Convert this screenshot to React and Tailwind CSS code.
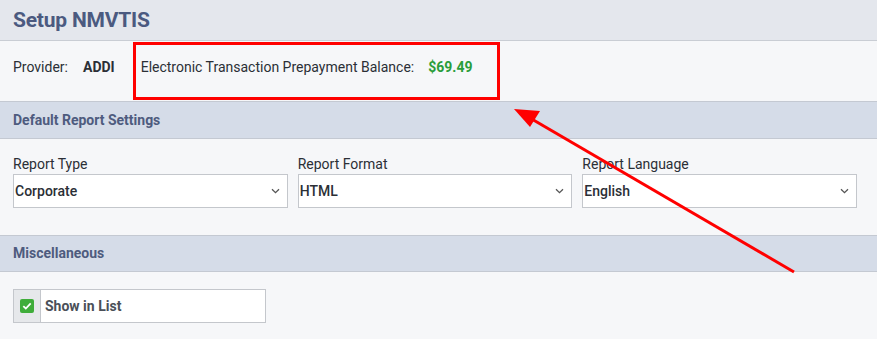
import React from "react";

function Chevron() {
  return (
    <svg width="9" height="6" viewBox="0 0 9 6" className="shrink-0">
      <path d="M1 1.2 L4.5 4.6 L8 1.2" fill="none" stroke="#555" strokeWidth="1.3" />
    </svg>
  );
}

function Select({ label, value }) {
  return (
    <div className="flex flex-col flex-1">
      <div className="text-[14px] text-[#2b2f36] leading-[17px] mb-[1px]">{label}</div>
      <div className="h-[34px] bg-white border border-[#c4c7cc] flex items-center pl-[1px] pr-[7px]">
        <span className="flex-1 text-[14px] font-medium text-[#2b2f36]">{value}</span>
        <Chevron />
      </div>
    </div>
  );
}

export default function App() {
  return (
    <div
      className="relative w-[877px] h-[339px] overflow-hidden bg-[#f6f7f9]"
      style={{ fontFamily: "Roboto, 'Liberation Sans', sans-serif" }}
    >
      <div className="h-[41px] bg-[#e4e7ed] border-b border-[#c9cdd4] flex items-center px-[13px]">
        <h1 className="text-[21px] font-bold text-[#4b5a80] tracking-[-0.2px] mt-[1px]">Setup NMVTIS</h1>
      </div>
      <div className="h-[60px] flex items-start pt-[16px] px-[13px] text-[14px] text-[#2b2f36]">
        <span>Provider:</span>
        <span className="ml-[15px] font-bold">ADDI</span>
        <span className="ml-[26px]">Electronic Transaction Prepayment Balance:</span>
        <span className="ml-[14px] font-bold text-[#2a9d3a]">$69.49</span>
      </div>
      <div className="h-[38px] bg-[#d5dce8] border-y border-[#c4c9d2] flex items-center px-[13px]">
        <span className="text-[14px] font-bold text-[#4e5b7e]">Default Report Settings</span>
      </div>
      <div className="h-[96px] flex gap-[10px] px-[13px] pt-[17px] pr-[20px]">
        <Select label="Report Type" value="Corporate" />
        <Select label="Report Format" value="HTML" />
        <Select label="Report Language" value="English" />
      </div>
      <div className="h-[37px] bg-[#d5dce8] border-y border-[#c4c9d2] flex items-center px-[13px]">
        <span className="text-[14px] font-bold text-[#4e5b7e]">Miscellaneous</span>
      </div>
      <div className="px-[13px] pt-[17px]">
        <div className="w-[253px] h-[34px] flex border border-[#c4c7cc] bg-white">
          <div className="w-[27px] bg-[#e6e8eb] border-r border-[#c4c7cc] flex items-center justify-center">
            <div className="w-[14px] h-[14px] rounded-[2px] bg-[#3fad3a] flex items-center justify-center">
              <svg width="10" height="8" viewBox="0 0 10 8">
                <path d="M1.3 4.2 L3.8 6.5 L8.7 1.4" fill="none" stroke="white" strokeWidth="1.8" />
              </svg>
            </div>
          </div>
          <div className="flex items-center pl-[4px] text-[14px] font-bold text-[#4a4f58]">Show in List</div>
        </div>
      </div>

      <div className="absolute left-[133px] top-[42px] w-[367px] h-[58px] border-[3px] border-[#ff0000]" />
      <svg className="absolute left-0 top-0 pointer-events-none" width="877" height="339">
        <line x1="794" y1="272" x2="530" y2="118" stroke="#ff0000" strokeWidth="3" />
        <polygon points="514,109 540,111 530,127" fill="#ff0000" />
      </svg>
    </div>
  );
}
